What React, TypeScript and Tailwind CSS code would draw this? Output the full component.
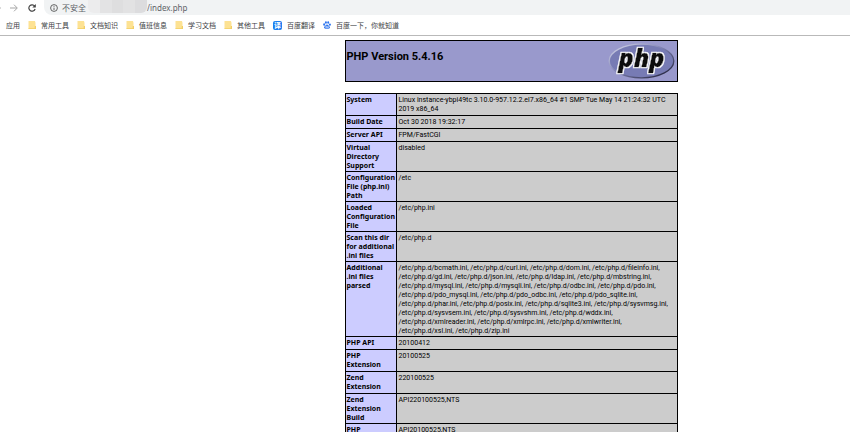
import type { ReactNode } from "react";

type Row = { label: string; value: string; tall?: boolean };

const rows: Row[] = [
  { label: "System", value: "Linux instance-ybpi49tc 3.10.0-957.12.2.el7.x86_64 #1 SMP Tue May 14 21:24:32 UTC\n2019 x86_64" },
  { label: "Build Date", value: "Oct 30 2018 19:32:17" },
  { label: "Server API", value: "FPM/FastCGI" },
  { label: "Virtual\nDirectory\nSupport", value: "disabled", tall: true },
  { label: "Configuration\nFile (php.ini)\nPath", value: "/etc", tall: true },
  { label: "Loaded\nConfiguration\nFile", value: "/etc/php.ini", tall: true },
  { label: "Scan this dir\nfor additional\n.ini files", value: "/etc/php.d", tall: true },
  {
    label: "Additional\n.ini files\nparsed",
    value: [
      "/etc/php.d/bcmath.ini, /etc/php.d/curl.ini, /etc/php.d/dom.ini, /etc/php.d/fileinfo.ini,",
      "/etc/php.d/gd.ini, /etc/php.d/json.ini, /etc/php.d/ldap.ini, /etc/php.d/mbstring.ini,",
      "/etc/php.d/mysql.ini, /etc/php.d/mysqli.ini, /etc/php.d/odbc.ini, /etc/php.d/pdo.ini,",
      "/etc/php.d/pdo_mysql.ini, /etc/php.d/pdo_odbc.ini, /etc/php.d/pdo_sqlite.ini,",
      "/etc/php.d/phar.ini, /etc/php.d/posix.ini, /etc/php.d/sqlite3.ini, /etc/php.d/sysvmsg.ini,",
      "/etc/php.d/sysvsem.ini, /etc/php.d/sysvshm.ini, /etc/php.d/wddx.ini,",
      "/etc/php.d/xmlreader.ini, /etc/php.d/xmlrpc.ini, /etc/php.d/xmlwriter.ini,",
      "/etc/php.d/xsl.ini, /etc/php.d/zip.ini",
    ].join("\n"),
    tall: true,
  },
  { label: "PHP API", value: "20100412" },
  { label: "PHP\nExtension", value: "20100525" },
  { label: "Zend\nExtension", value: "220100525" },
  { label: "Zend\nExtension\nBuild", value: "API220100525,NTS", tall: true },
  { label: "PHP\nExtension\nBuild", value: "API20100525,NTS", tall: true },
];

function FolderIcon() {
  return (
    <svg viewBox="0 0 8 8" className="size-2">
      <path d="M.5 0h6.6v1.2h.4V8H.5z" fill="#fde293" />
      <path d="M.5 7.2h7V8h-7zM6.8 5H8v3H6.5z" fill="#f2cf66" />
    </svg>
  );
}

function TranslateIcon() {
  return (
    <span className="flex size-[9px] items-center justify-center rounded-[2px] bg-[#1a7df0] text-[7px] leading-none font-bold text-white">
      译
    </span>
  );
}

function PawIcon() {
  return (
    <svg viewBox="0 0 16 16" className="size-2" fill="#2b73ee">
      <ellipse cx="2.3" cy="7" rx="1.9" ry="2.4" />
      <ellipse cx="5.8" cy="3" rx="1.9" ry="2.6" />
      <ellipse cx="10.4" cy="3" rx="1.9" ry="2.6" />
      <ellipse cx="13.8" cy="7.2" rx="1.9" ry="2.4" />
      <path d="M8 6.8c2 0 2.6 1.8 4 3.2 1.6 1.5 2.4 2.6 1.6 4.2-.9 1.8-2.9 1.3-5.6 1.3s-4.7.5-5.6-1.3c-.8-1.6 0-2.7 1.6-4.2 1.4-1.4 2-3.2 4-3.2z" />
      <path d="M5.5 10.5h2v3h-2zM9 10.5v3h2.2v-3" fill="none" stroke="#fff" strokeWidth="1" />
    </svg>
  );
}

function PhpLogo() {
  return (
    <svg viewBox="0 0 66 36" className="mt-0.5 h-9 w-[66px] overflow-visible" role="img" aria-label="PHP logo">
      <defs>
        <linearGradient id="rim" x1="0" y1="0" x2="1" y2="1">
          <stop offset="0" stopColor="#dcdeee" />
          <stop offset="0.45" stopColor="#8285b5" />
          <stop offset="1" stopColor="#14142a" />
        </linearGradient>
        <filter id="outline" x="-10%" y="-10%" width="120%" height="120%">
          <feMorphology in="SourceAlpha" operator="dilate" radius="1" result="grown" />
          <feFlood floodColor="#fff" />
          <feComposite in2="grown" operator="in" />
          <feMerge>
            <feMergeNode />
            <feMergeNode in="SourceGraphic" />
          </feMerge>
        </filter>
      </defs>
      <ellipse cx="32.5" cy="18" rx="32.3" ry="16.8" fill="#777bb4" stroke="url(#rim)" strokeWidth="1.3" />
      <text
        x="32.5"
        y="23.5"
        textAnchor="middle"
        className="font-['Open_Sans',sans-serif] text-[25px] font-extrabold italic"
        fill="#111"
        stroke="#111"
        strokeWidth="0.5"
        filter="url(#outline)"
      >
        php
      </text>
    </svg>
  );
}

const bookmarks: { label: string; icon: ReactNode }[] = [
  { label: "常用工具", icon: <FolderIcon /> },
  { label: "文档知识", icon: <FolderIcon /> },
  { label: "值班信息", icon: <FolderIcon /> },
  { label: "学习文档", icon: <FolderIcon /> },
  { label: "其他工具", icon: <FolderIcon /> },
  { label: "百度翻译", icon: <TranslateIcon /> },
  { label: "百度一下，你就知道", icon: <PawIcon /> },
];

function BrowserBar() {
  return (
    <header className="border-b border-[#b9b9b9] bg-white font-['Noto_Sans_CJK_SC',sans-serif]">
      <div className="flex h-[15px] items-center">
        <button aria-label="Back" className="w-2">
          <svg viewBox="0 0 8 8" className="size-2" fill="none" stroke="#b5b5b5">
            <path d="M0 4h1" />
          </svg>
        </button>
        <button aria-label="Forward" className="ml-0.5">
          <svg viewBox="0 0 8 8" className="size-2" fill="none" stroke="#a5a5a5">
            <path d="M0 4h7M4 .7 7.3 4 4 7.3" />
          </svg>
        </button>
        <button aria-label="Reload" className="ml-2.5">
          <svg viewBox="0 0 8 8" className="size-2" fill="none" stroke="#444" strokeWidth="1.2">
            <path d="M6.7 2.2A3.2 3.2 0 1 0 7.1 5" />
            <path d="M7.8 0v3.5H4.3z" fill="#444" stroke="none" />
          </svg>
        </button>
        <div className="ml-2 flex h-[15px] flex-1 items-center rounded-bl-lg bg-[#f1f3f4] pl-1.5 text-[8px] leading-none text-[#5f6368]">
          <svg viewBox="0 0 8 8" className="size-2" fill="none" stroke="#555" strokeWidth="0.9">
            <circle cx="4" cy="4" r="3.4" />
            <path d="M4 3.6V6M4 1.9v.9" />
          </svg>
          <span className="ml-1">不安全</span>
          <span className="ml-0.5 flex h-[13px] w-[59px] self-start overflow-hidden rounded-b-md">
            <span className="flex-1 bg-[#ececed]" />
            <span className="flex-1 bg-[#e3e3e4]" />
            <span className="flex-1 bg-[#dededf]" />
            <span className="flex-1 bg-[#e2e2e3]" />
            <span className="flex-1 bg-[#dcdcde]" />
          </span>
          <span className="font-['Noto_Sans',sans-serif]">/index.php</span>
        </div>
      </div>
      <nav className="flex h-5 items-center gap-2 pl-1.5 text-[7px] leading-none whitespace-nowrap text-[#3c4043]">
        <a href="#apps">应用</a>
        {bookmarks.map((b) => (
          <a key={b.label} href="#bookmark" className="flex items-center gap-[5px]">
            {b.icon}
            {b.label}
          </a>
        ))}
      </nav>
    </header>
  );
}

export default function App() {
  return (
    <div className="h-screen overflow-hidden bg-white">
      <BrowserBar />

      <main className="pt-1 pl-[172px] font-[Roboto,sans-serif] text-[7px] leading-[9px] text-black">
        <div className="mx-auto w-full max-w-[333px]">
          <div className="flex h-[42px] items-start justify-between border border-black bg-[#9999cc] pr-0.5 pl-px">
            <h1 className="pt-2 text-[11px] leading-4 font-bold">PHP Version 5.4.16</h1>
            <PhpLogo />
          </div>

          <table className="mt-[11px] w-full table-fixed border-collapse">
            <colgroup>
              <col className="w-[51px]" />
              <col />
            </colgroup>
            <tbody className="whitespace-pre-line">
              {rows.map((row) => (
                <tr key={row.label} className={row.tall ? "[&>td]:pb-0 [&>th]:pb-px" : "[&>td]:pb-px [&>th]:pb-0.5"}>
                  <th
                    scope="row"
                    className="border border-black bg-[#ccccff] pt-px pl-px text-left align-top font-['Noto_Sans',sans-serif] font-bold"
                  >
                    {row.label}
                  </th>
                  <td className="border border-black bg-[#cccccc] pt-0.5 pl-0.5 align-top">{row.value}</td>
                </tr>
              ))}
            </tbody>
          </table>
        </div>
      </main>
    </div>
  );
}
